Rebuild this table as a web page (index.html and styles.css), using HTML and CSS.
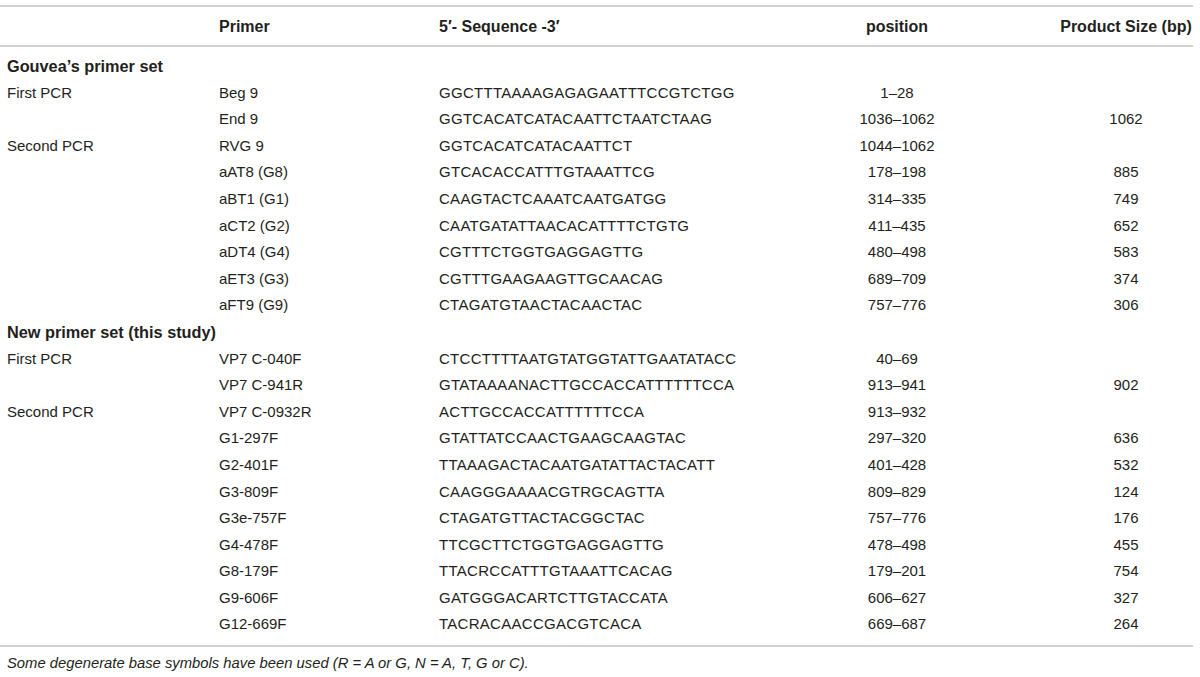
FILE: index.html
```html
<!DOCTYPE html>
<html>
<head>
<meta charset="utf-8">
<link rel="stylesheet" href="styles.css">
</head>
<body>
<div class="page">
<table class="primers">
<colgroup>
<col class="c1"><col class="c2"><col class="c3"><col class="c4"><col class="c5">
</colgroup>
<thead>
<tr>
<th class="l"></th>
<th class="l">Primer</th>
<th class="l">5′- Sequence -3′</th>
<th class="c">position</th>
<th class="c">Product Size (bp)</th>
</tr>
</thead>
<tbody>
<tr class="first"><td class="sec" colspan="5">Gouvea’s primer set</td></tr>
<tr><td class="l">First PCR</td><td>Beg 9</td><td class="seq">GGCTTTAAAAGAGAGAATTTCCGTCTGG</td><td class="c">1–28</td><td class="c"></td></tr>
<tr><td></td><td>End 9</td><td class="seq">GGTCACATCATACAATTCTAATCTAAG</td><td class="c">1036–1062</td><td class="c">1062</td></tr>
<tr><td class="l">Second PCR</td><td>RVG 9</td><td class="seq">GGTCACATCATACAATTCT</td><td class="c">1044–1062</td><td class="c"></td></tr>
<tr><td></td><td>aAT8 (G8)</td><td class="seq">GTCACACCATTTGTAAATTCG</td><td class="c">178–198</td><td class="c">885</td></tr>
<tr><td></td><td>aBT1 (G1)</td><td class="seq">CAAGTACTCAAATCAATGATGG</td><td class="c">314–335</td><td class="c">749</td></tr>
<tr><td></td><td>aCT2 (G2)</td><td class="seq">CAATGATATTAACACATTTTCTGTG</td><td class="c">411–435</td><td class="c">652</td></tr>
<tr><td></td><td>aDT4 (G4)</td><td class="seq">CGTTTCTGGTGAGGAGTTG</td><td class="c">480–498</td><td class="c">583</td></tr>
<tr><td></td><td>aET3 (G3)</td><td class="seq">CGTTTGAAGAAGTTGCAACAG</td><td class="c">689–709</td><td class="c">374</td></tr>
<tr><td></td><td>aFT9 (G9)</td><td class="seq">CTAGATGTAACTACAACTAC</td><td class="c">757–776</td><td class="c">306</td></tr>
<tr><td class="sec" colspan="5">New primer set (this study)</td></tr>
<tr><td class="l">First PCR</td><td>VP7 C-040F</td><td class="seq">CTCCTTTTAATGTATGGTATTGAATATACC</td><td class="c">40–69</td><td class="c"></td></tr>
<tr><td></td><td>VP7 C-941R</td><td class="seq">GTATAAAANACTTGCCACCATTTTTTCCA</td><td class="c">913–941</td><td class="c">902</td></tr>
<tr><td class="l">Second PCR</td><td>VP7 C-0932R</td><td class="seq">ACTTGCCACCATTTTTTCCA</td><td class="c">913–932</td><td class="c"></td></tr>
<tr><td></td><td>G1-297F</td><td class="seq">GTATTATCCAACTGAAGCAAGTAC</td><td class="c">297–320</td><td class="c">636</td></tr>
<tr><td></td><td>G2-401F</td><td class="seq">TTAAAGACTACAATGATATTACTACATT</td><td class="c">401–428</td><td class="c">532</td></tr>
<tr><td></td><td>G3-809F</td><td class="seq">CAAGGGAAAACGTRGCAGTTA</td><td class="c">809–829</td><td class="c">124</td></tr>
<tr><td></td><td>G3e-757F</td><td class="seq">CTAGATGTTACTACGGCTAC</td><td class="c">757–776</td><td class="c">176</td></tr>
<tr><td></td><td>G4-478F</td><td class="seq">TTCGCTTCTGGTGAGGAGTTG</td><td class="c">478–498</td><td class="c">455</td></tr>
<tr><td></td><td>G8-179F</td><td class="seq">TTACRCCATTTGTAAATTCACAG</td><td class="c">179–201</td><td class="c">754</td></tr>
<tr><td></td><td>G9-606F</td><td class="seq">GATGGGACARTCTTGTACCATA</td><td class="c">606–627</td><td class="c">327</td></tr>
<tr class="last"><td></td><td>G12-669F</td><td class="seq">TACRACAACCGACGTCACA</td><td class="c">669–687</td><td class="c">264</td></tr>
</tbody>
</table>
<p class="note">Some degenerate base symbols have been used (R = A or G, N = A, T, G or C).</p>
</div>
</body>
</html>
```

FILE: styles.css
```css
html, body {
  margin: 0;
  padding: 0;
  background: #ffffff;
}
body {
  font-family: "Liberation Sans", Arial, Helvetica, sans-serif;
  font-size: 15px;
  color: #231f20;
}
.page {
  padding-top: 5px;
  width: 1193px;
}
.primers {
  width: 1193px;
  border-collapse: collapse;
  table-layout: fixed;
}
.c1 { width: 219px; }
.c2 { width: 220px; }
.c3 { width: 296px; }
.c4 { width: 324px; }
.c5 { width: 134px; }
.primers th,
.primers td {
  padding: 0;
  white-space: nowrap;
  text-align: left;
  vertical-align: middle;
}
.primers thead th {
  font-weight: bold;
  font-size: 16px;
  height: 36px;
  padding-top: 2px;
  border-top: 2px solid #d2d2d2;
  border-bottom: 2px solid #d2d2d2;
}
.primers tbody td {
  line-height: 26.6px;
}
.primers td.seq {
  letter-spacing: 0.28px;
}
.primers td.l {
  padding-left: 7px;
}
.primers td.sec {
  font-weight: bold;
  font-size: 16.3px;
  padding-left: 7px;
}
.primers .c {
  text-align: center;
}
.primers tr.first td {
  padding-top: 6px;
}
.primers tr.last td {
  padding-bottom: 7px;
  border-bottom: 2px solid #d2d2d2;
}
.note {
  margin: 6px 0 0 7px;
  font-style: italic;
  font-size: 14.8px;
  line-height: 20px;
}
```
